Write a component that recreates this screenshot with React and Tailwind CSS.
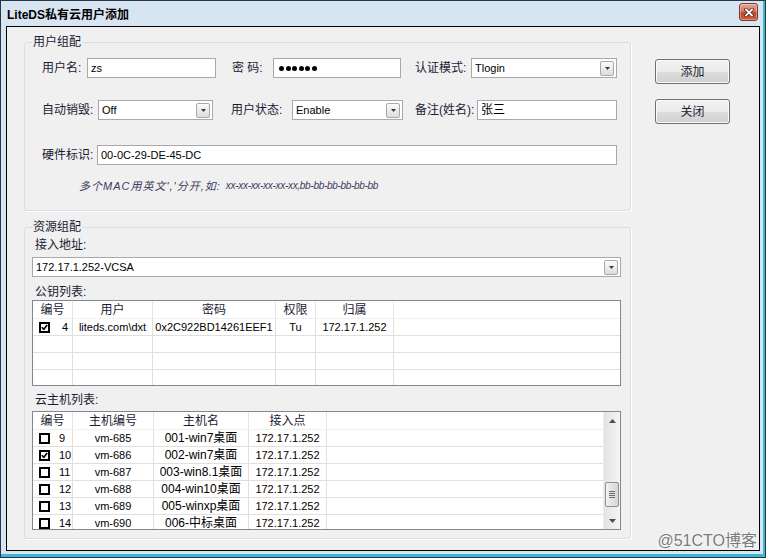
import React from "react";

const F = "font-['Liberation_Sans','Noto_Sans_CJK_SC',sans-serif]";
const LBL = "text-[12px] leading-[16px] text-[#1b1b33] whitespace-nowrap";
const VAL = "text-[11px] leading-[14px] text-black whitespace-nowrap";

function DropBtn() {
  return (
    <div className="w-[14px] h-[15px] border border-[#a8a8a8] rounded-[2px] bg-[linear-gradient(to_bottom,#fbfbfb,#dcdcdc)] flex items-center justify-center">
      <svg width="5" height="3" viewBox="0 0 5 3">
        <path d="M0 0H5L2.5 3Z" fill="#3a3a3a" />
      </svg>
    </div>
  );
}

function Select({ className, children }) {
  return (
    <div className={`${className} h-[20px] border border-[#a9a9a9] bg-white flex items-center pl-[3px] pr-[2px]`}>
      <span className={`flex-1 ${VAL}`}>{children}</span>
      <DropBtn />
    </div>
  );
}

function Input({ className, children }) {
  return (
    <div className={`${className} h-[20px] border border-[#a9a9a9] bg-white flex items-center pl-[3px]`}>
      {children}
    </div>
  );
}

function Check({ checked }) {
  return (
    <div className="w-[11px] h-[11px] border-2 border-black bg-white flex items-center justify-center shrink-0">
      {checked && (
        <svg width="7" height="7" viewBox="0 0 7 7">
          <path d="M0.8 3.3L2.8 5.3L6.2 1" stroke="#000" strokeWidth="1.6" fill="none" />
        </svg>
      )}
    </div>
  );
}

function Button({ children }) {
  return (
    <div className="w-[75px] h-[25px] rounded-[3px] border border-[#707070] bg-[linear-gradient(to_bottom,#f2f2f2_0%,#ebebeb_50%,#dddddd_51%,#cfcfcf_100%)] shadow-[inset_0_0_0_1px_#fbfbfb] flex items-center justify-center text-[12px] leading-[16px] text-[#1b1b33]">
      {children}
    </div>
  );
}

function CloseBtn() {
  return (
    <div className="mt-[2px] w-[19px] h-[18px] rounded-[3px] border border-[#6e3d34] bg-[linear-gradient(to_bottom,#eaa595_0%,#d8775e_45%,#c6411f_55%,#d35e3d_100%)] shadow-[inset_0_0_0_1px_rgba(255,255,255,0.35)] flex items-center justify-center">
      <svg width="10" height="9" viewBox="0 0 10 9">
        <path d="M2 1.5L8 7.5M8 1.5L2 7.5" stroke="#4a2a26" strokeWidth="3.4" strokeLinecap="square" />
        <path d="M2 1.5L8 7.5M8 1.5L2 7.5" stroke="#ffffff" strokeWidth="1.8" strokeLinecap="square" />
      </svg>
    </div>
  );
}

const GRID = "border-[#e2dfda]";

function Table1() {
  const widths = ["w-[40px]", "w-[80px]", "w-[123px]", "w-[40px]", "w-[78px]"];
  const heads = ["编号", "用户", "密码", "权限", "归属"];
  return (
    <div className="ml-[7px] w-[589px] h-[86px] border border-[#828790] bg-white overflow-hidden">
      <div className="flex h-[18px] border-b border-[#f0f0f0]">
        {heads.map((h, i) => (
          <div key={i} className={`${widths[i]} h-full border-r border-[#e5e5e5] flex items-center justify-center ${LBL}`}>
            {h}
          </div>
        ))}
      </div>
      <div className={`flex h-[17px] border-b ${GRID}`}>
        <div className={`${widths[0]} h-full border-r ${GRID} flex items-center pl-[6px]`}>
          <Check checked />
          <span className={`ml-[12px] ${VAL}`}>4</span>
        </div>
        <div className={`${widths[1]} h-full border-r ${GRID} flex items-center justify-center ${VAL}`}>liteds.com\dxt</div>
        <div className={`${widths[2]} h-full border-r ${GRID} flex items-center justify-center ${VAL}`}>0x2C922BD14261EEF1</div>
        <div className={`${widths[3]} h-full border-r ${GRID} flex items-center justify-center ${VAL}`}>Tu</div>
        <div className={`${widths[4]} h-full border-r ${GRID} flex items-center justify-center ${VAL}`}>172.17.1.252</div>
      </div>
      {[0, 1, 2].map((r) => (
        <div key={r} className={`flex h-[17px] border-b ${GRID}`}>
          {widths.map((w, i) => (
            <div key={i} className={`${w} h-full border-r ${GRID}`} />
          ))}
        </div>
      ))}
    </div>
  );
}

function ScrollBar() {
  return (
    <div className="w-[17px] h-full flex flex-col bg-[linear-gradient(to_right,#e3e3e3,#f5f5f5)] border-l border-[#ececec]">
      <div className="h-[17px] flex items-center justify-center">
        <svg width="7" height="4" viewBox="0 0 7 4">
          <path d="M0 4H7L3.5 0Z" fill="#4d4d4d" />
        </svg>
      </div>
      <div className="flex-1 flex flex-col">
        <div className="mt-[53px] mx-[1px] h-[25px] rounded-[2px] border border-[#8e8f8f] bg-[linear-gradient(to_right,#f3f3f3,#e2e2e2_50%,#d6d6d6)] flex flex-col items-center justify-center gap-[1px]">
          <div className="w-[6px] h-px bg-[#6d6d6d]" />
          <div className="w-[6px] h-px bg-[#6d6d6d]" />
          <div className="w-[6px] h-px bg-[#6d6d6d]" />
          <div className="w-[6px] h-px bg-[#6d6d6d]" />
        </div>
      </div>
      <div className="h-[17px] flex items-center justify-center">
        <svg width="7" height="4" viewBox="0 0 7 4">
          <path d="M0 0H7L3.5 4Z" fill="#4d4d4d" />
        </svg>
      </div>
    </div>
  );
}

function Table2() {
  const widths = ["w-[40px]", "w-[81px]", "w-[95px]", "w-[78px]"];
  const heads = ["编号", "主机编号", "主机名", "接入点"];
  const rows = [
    [9, false, "vm-685", "001-win7桌面"],
    [10, true, "vm-686", "002-win7桌面"],
    [11, false, "vm-687", "003-win8.1桌面"],
    [12, false, "vm-688", "004-win10桌面"],
    [13, false, "vm-689", "005-winxp桌面"],
    [14, false, "vm-690", "006-中标桌面"],
  ];
  return (
    <div className="mt-[3px] ml-[7px] w-[589px] h-[119px] border border-[#828790] bg-white flex overflow-hidden">
      <div className="flex-1 flex flex-col overflow-hidden">
        <div className="flex h-[18px] shrink-0 border-b border-[#f0f0f0]">
          {heads.map((h, i) => (
            <div key={i} className={`${widths[i]} h-full border-r border-[#e5e5e5] flex items-center justify-center ${LBL}`}>
              {h}
            </div>
          ))}
        </div>
        {rows.map(([n, c, vm, name]) => (
          <div key={n} className={`flex h-[17px] shrink-0 border-b ${GRID}`}>
            <div className={`${widths[0]} h-full border-r ${GRID} flex items-center pl-[6px]`}>
              <Check checked={c} />
              <span className={`ml-[9px] ${VAL}`}>{n}</span>
            </div>
            <div className={`${widths[1]} h-full border-r ${GRID} flex items-center justify-center ${VAL}`}>{vm}</div>
            <div className={`${widths[2]} h-full border-r ${GRID} flex items-center justify-center text-[12px] leading-[14px] text-black whitespace-nowrap`}>{name}</div>
            <div className={`${widths[3]} h-full border-r ${GRID} flex items-center justify-center ${VAL}`}>172.17.1.252</div>
          </div>
        ))}
      </div>
      <ScrollBar />
    </div>
  );
}

export default function App() {
  return (
    <div className={`${F} relative w-[766px] h-[558px] bg-[#2b3641] p-px flex`}>
      <div className="flex-1 flex flex-col bg-[#d7e4f2] border-r-2 border-b-[3px] border-[#3ab7d6]">
        <div className="h-[25px] shrink-0 flex items-start justify-between pl-[6px] pr-[5px]">
          <div className="pt-[6px] text-[12px] leading-[16px] font-bold text-black">LiteDS私有云用户添加</div>
          <CloseBtn />
        </div>
        <div className="flex-1 ml-[5px] mr-[3px] mb-[3px] border border-black bg-[#f0f0f0] flex pl-[17px] pt-[8px]">
          <div className="w-[607px] flex flex-col">
            <fieldset className="h-[176px] border border-[#d5dfe5] rounded-[3px] shadow-[1px_1px_0_#ffffff]">
              <legend className={`ml-[7px] px-[1px] text-[12px] leading-[14px] text-[#1b1b33]`}>用户组配</legend>
              <div className="mt-[9px] flex items-center h-[20px] pl-[17px]">
                <span className={`w-[45px] ${LBL}`}>用户名:</span>
                <Input className="w-[129px]"><span className={VAL}>zs</span></Input>
                <span className={`ml-[16px] w-[41px] ${LBL}`}>密 码:</span>
                <Input className="w-[128px]">
                  <div className="flex items-center gap-[1.5px] pl-[2px]">
                    {[0, 1, 2, 3, 4, 5].map((i) => (
                      <div key={i} className="w-[5px] h-[5px] rounded-full bg-black" />
                    ))}
                  </div>
                </Input>
                <span className={`ml-[14px] w-[56px] ${LBL}`}>认证模式:</span>
                <Select className="w-[146px]">Tlogin</Select>
              </div>
              <div className="mt-[22px] flex items-center h-[20px] pl-[17px]">
                <span className={`w-[56px] ${LBL}`}>自动销毁:</span>
                <Select className="w-[115px]">Off</Select>
                <span className={`ml-[18px] w-[61px] ${LBL}`}>用户状态:</span>
                <Select className="w-[111px]">Enable</Select>
                <span className={`ml-[12px] w-[62px] ${LBL}`}>备注(姓名):</span>
                <Input className="w-[140px]"><span className="text-[12px] leading-[16px] text-black">张三</span></Input>
              </div>
              <div className="mt-[25px] flex items-center h-[20px] pl-[17px]">
                <span className={`w-[55px] ${LBL}`}>硬件标识:</span>
                <Input className="w-[520px]"><span className={VAL}>00-0C-29-DE-45-DC</span></Input>
              </div>
              <div className="mt-[14px] pl-[54px] h-[14px] flex items-center italic text-[#3c3c5c] whitespace-nowrap">
                <span className="text-[11px] leading-[14px] tracking-[1px]">多个MAC用英文','分开,如:</span>
                <span className="ml-[5px] text-[10px] leading-[14px] tracking-[-0.3px]">xx-xx-xx-xx-xx-xx,bb-bb-bb-bb-bb-bb</span>
              </div>
            </fieldset>
            <fieldset className="mt-[9px] h-[319px] border border-[#d5dfe5] rounded-[3px] shadow-[1px_1px_0_#ffffff] flex flex-col">
              <legend className={`ml-[7px] px-[1px] text-[12px] leading-[14px] text-[#1b1b33]`}>资源组配</legend>
              <div className={`mt-[3px] pl-[10px] h-[16px] ${LBL}`}>接入地址:</div>
              <Select className="mt-[4px] ml-[7px] w-[589px]">172.17.1.252-VCSA</Select>
              <div className={`mt-[7px] pl-[10px] h-[16px] ${LBL}`}>公钥列表:</div>
              <Table1 />
              <div className={`mt-[6px] pl-[10px] h-[16px] ${LBL}`}>云主机列表:</div>
              <Table2 />
            </fieldset>
          </div>
          <div className="ml-[24px] pt-[24px] flex flex-col gap-[15px]">
            <Button>添加</Button>
            <Button>关闭</Button>
          </div>
        </div>
      </div>
      <div className="absolute right-[9px] bottom-[7px] text-[16px] leading-[20px] text-[#7a7a7a] [text-shadow:0_0_2px_#ffffff,0_0_1px_#ffffff]">
        @51CTO博客
      </div>
    </div>
  );
}
